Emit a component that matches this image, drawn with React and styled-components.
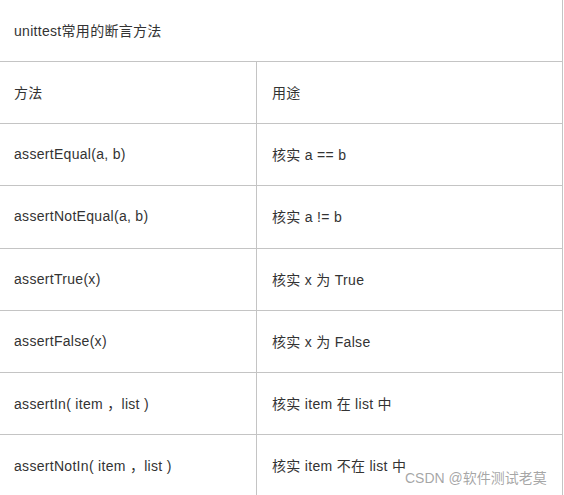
import React from 'react';
import styled, { createGlobalStyle } from 'styled-components';

const GlobalStyle = createGlobalStyle`
  body {
    margin: 0;
    background: #FFFFFF;
  }
`;

const Page = styled.div`
  position: relative;
  width: 564px;
  height: 495px;
  overflow: hidden;
  font-family: "Liberation Sans", "Noto Sans CJK SC", sans-serif;
  font-size: 14px;
  letter-spacing: 0.3px;
  color: #333333;
`;

const Table = styled.div`
  width: 563px;
  border-right: 1px solid #C4C4C4;
  box-sizing: border-box;
`;

const TitleRow = styled.div`
  height: 59px;
  display: flex;
  align-items: center;
  padding: 0 0 2px 14px;
  border-bottom: 1px solid #C4C4C4;
`;

const Row = styled.div`
  display: grid;
  grid-template-columns: 257px 1fr;
  height: ${props => props.$h}px;
  border-bottom: 1px solid #C4C4C4;
`;

const Cell = styled.div`
  display: flex;
  align-items: center;
  padding-left: ${props => props.$right ? 15 : 14}px;
  padding-bottom: 2px;
  border-right: ${props => props.$right ? 'none' : '1px solid #C4C4C4'};
  white-space: pre;
`;

const Watermark = styled.div`
  position: absolute;
  left: 405px;
  top: 467px;
  font-family: "Liberation Sans", "Noto Sans CJK SC", sans-serif;
  font-size: 14px;
  letter-spacing: 0;
  color: rgba(150, 150, 150, 0.85);
  white-space: nowrap;
`;

const rows = [
  ['方法', '用途'],
  ['assertEqual(a, b)', '核实 a == b'],
  ['assertNotEqual(a, b)', '核实 a != b'],
  ['assertTrue(x)', '核实 x 为 True'],
  ['assertFalse(x)', '核实 x 为 False'],
  ['assertIn( item ，list )', '核实 item 在 list 中'],
  ['assertNotIn( item ，list )', '核实 item 不在 list 中'],
];

export default function App() {
  return (
    <Page>
      <GlobalStyle />
      <Table>
        <TitleRow>unittest常用的断言方法</TitleRow>
        {rows.map(([m, u], i) => (
          <Row key={i} $h={i === 2 ? 62 : 61}>
            <Cell>{m}</Cell>
            <Cell $right>{u}</Cell>
          </Row>
        ))}
      </Table>
      <Watermark>CSDN @软件测试老莫</Watermark>
    </Page>
  );
}
